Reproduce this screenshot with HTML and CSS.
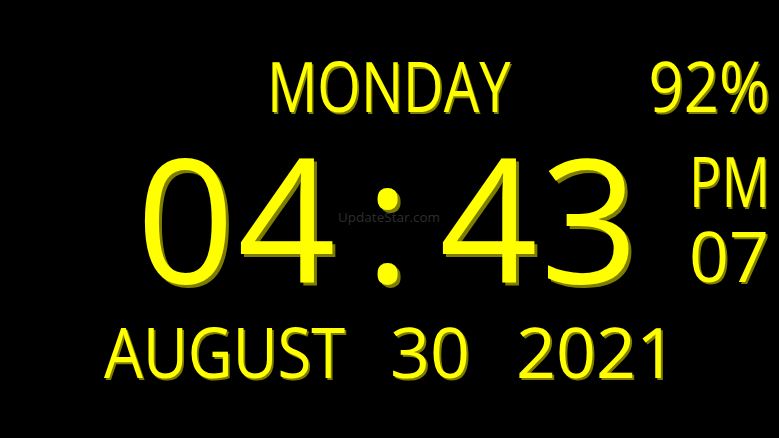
FILE: index.html
```html
<!DOCTYPE html>
<html lang="en">
<head>
<meta charset="utf-8">
<title>Digital Clock</title>
<link rel="stylesheet" href="styles.css">
</head>
<body>
<div class="screen">
  <div class="row row-top">
    <span class="day">MONDAY</span>
    <span class="batt">92%</span>
  </div>
  <div class="row row-mid">
    <div class="clock">
      <span class="cell">0</span>
      <span class="cell">4</span>
      <span class="cell">:</span>
      <span class="cell">4</span>
      <span class="cell">3</span>
    </div>
    <div class="side">
      <span class="ampm">PM</span>
      <span class="sec">07</span>
    </div>
  </div>
  <div class="row row-date">
    <span class="w w1">AUGUST</span>
    <span class="w w2">30</span>
    <span class="w w3">2021</span>
  </div>
  <div class="watermark">UpdateStar.com</div>
</div>
</body>
</html>
```
FILE: styles.css
```css
html, body {
  margin: 0;
  padding: 0;
  background: #000;
}
.screen {
  position: relative;
  width: 779px;
  height: 438px;
  overflow: hidden;
  background: #000;
  display: flex;
  flex-direction: column;
  padding-top: 50px;
  box-sizing: border-box;
  font-family: "Open Sans", "Noto Sans", sans-serif;
  color: #ffff00;
  text-shadow: 2px 2px 0 #7d7d00;
}
.row {
  display: flex;
  white-space: nowrap;
}
.row-top {
  font-size: 70px;
  line-height: 70px;
  height: 70px;
}
.day {
  display: inline-block;
  margin-left: 267px;
  width: 246px;
  transform: scaleX(0.8);
  transform-origin: left center;
}
.batt {
  display: inline-block;
  margin-left: auto;
  margin-right: 9px;
  transform: scaleX(0.88);
  transform-origin: right center;
}
.row-mid {
  margin-top: 10px;
  height: 172px;
}
.clock {
  display: flex;
  margin-left: 135px;
  font-size: 172px;
  line-height: 172px;
  text-shadow: 3px 3px 0 #7d7d00;
}
.cell {
  width: 101px;
  text-align: center;
}
.side {
  display: flex;
  flex-direction: column;
  margin-left: 49px;
  margin-top: 13px;
  font-size: 70px;
  line-height: 75px;
}
.ampm {
  display: inline-block;
  width: 85px;
  transform: scaleX(0.77);
  transform-origin: left center;
}
.row-date {
  margin-top: 14px;
  font-size: 70px;
  line-height: 70px;
  height: 70px;
}
.w {
  display: inline-block;
}
.w1 {
  margin-left: 104px;
  width: 241px;
  transform: scaleX(0.88);
  transform-origin: left center;
}
.w2 {
  margin-left: 45px;
}
.w3 {
  margin-left: 46px;
}
.watermark {
  position: absolute;
  left: 338px;
  top: 208px;
  font-size: 13.5px;
  line-height: 18px;
  color: #2e2e2e;
  text-shadow: none;
}
```
